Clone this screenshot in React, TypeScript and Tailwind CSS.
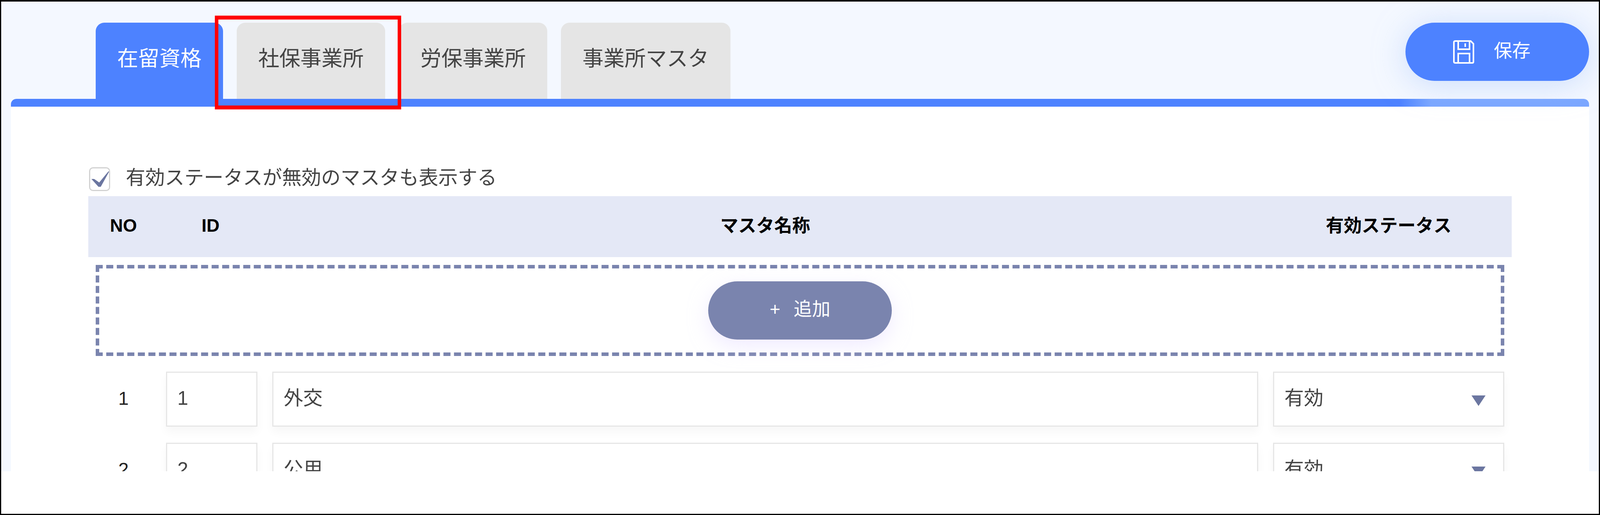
const tabs = [
  { label: "在留資格", active: true },
  { label: "社保事業所" },
  { label: "労保事業所" },
  { label: "事業所マスタ" },
];

const rows = [
  { no: 1, name: "外交" },
  { no: 2, name: "公用" },
];

const fieldClass =
  "flex h-[141px] items-center border-[3px] border-[#e6e6e6] bg-white pb-[4px] pl-[26px] text-[50px] text-[#444] shadow-[0_14px_22px_rgba(0,0,0,0.035)]";

function SaveIcon() {
  return (
    <svg width="54" height="60" viewBox="0 0 54 60" fill="none" stroke="white" strokeWidth="4">
      <path d="M6 2H45L52 9V55Q52 58 49 58H6Q2 58 2 55V5Q2 2 6 2Z" />
      <path d="M13 2V23H42V2" />
      <path d="M31 8V17" />
      <path d="M13 58V34H42V58" />
    </svg>
  );
}

function CheckMark() {
  return (
    <svg width="54" height="61" viewBox="0 0 54 61" className="absolute left-[-3px] top-[-3px]">
      <path d="M6 30H13L26 39L50 10L51 12L30 50H24Z" fill="#6b76a0" />
    </svg>
  );
}

export default function App() {
  return (
    <div className="relative flex h-[1318px] w-full flex-col border-x-[3px] border-t-[4px] border-b-[3px] border-black bg-white [font-family:'Liberation_Sans','Noto_Sans_CJK_JP',sans-serif]">
      <div className="h-[1202px] overflow-hidden bg-[#f4f8ff] px-[25px]">
        <div className="flex h-[249px] items-start justify-between pt-[54px]">
          <div className="flex gap-[35px] pl-[217px]">
            {tabs.map((tab) => (
              <div
                key={tab.label}
                className={
                  tab.active
                    ? "h-[195px] rounded-t-[22px] bg-[#4d82ff] px-[55px] pt-[65px] text-[54px] leading-[54px] text-white"
                    : "h-[195px] rounded-t-[22px] bg-[#e5e5e5] px-[55px] pt-[65px] text-[54px] leading-[54px] text-[#444]"
                }
              >
                {tab.label}
              </div>
            ))}
          </div>
          <button className="relative z-10 flex h-[149px] w-[470px] items-center justify-center gap-[50px] rounded-full bg-[#4d82ff] pr-[28px] text-[47px] text-white shadow-[0_8px_80px_rgba(170,198,250,0.55)]">
            <SaveIcon />
            <span className="mb-[5px]">保存</span>
          </button>
        </div>

        <div className="h-[20px] rounded-t-[14px] bg-gradient-to-r from-[#4d82ff] from-[88%] to-[#7aa6ff] to-[90%]" />
        <div className="bg-white px-[198px] pt-[155px]">
          <div className="flex h-[74px] items-start gap-[40px]">
            <div className="relative ml-[2px] h-[61px] w-[54px] rounded-[10px] border-[3px] border-[#d2d2d2] bg-white">
              <CheckMark />
            </div>
            <span className="text-[50px] leading-[54px] text-[#444]">
              有効ステータスが無効のマスタも表示する
            </span>
          </div>

          <div className="grid h-[156px] grid-cols-[142px_234px_1fr_592px] items-center gap-x-[38px] bg-[#e4e8f6] px-[19px] pb-[6px] text-center text-[46px] font-bold text-black">
            <div>NO</div>
            <div className="pr-[6px]">ID</div>
            <div>マスタ名称</div>
            <div>有効ステータス</div>
          </div>

          <div className="mx-[19px] mt-[20px] flex h-[233px] items-center justify-center border-[9px] border-dashed border-[#7a84ae]">
            <button className="relative z-10 flex h-[149px] w-[470px] items-center justify-center gap-[34px] rounded-full bg-[#7a84ae] pb-[6px] text-[47px] text-white shadow-[0_16px_50px_rgba(225,215,255,0.5)]">
              <span>+</span>
              <span>追加</span>
            </button>
          </div>

          <div className="mt-[40px] flex flex-col gap-[41px] px-[19px]">
            {rows.map((row) => (
              <div key={row.no} className="grid grid-cols-[142px_234px_1fr_592px] items-center gap-x-[38px]">
                <div className="pb-[4px] text-center text-[48px] text-[#222]">{row.no}</div>
                <div className={fieldClass}>{row.no}</div>
                <div className={fieldClass}>{row.name}</div>
                <div className={`${fieldClass} justify-between pr-[45px]`}>
                  <span>有効</span>
                  <svg width="36" height="27" viewBox="0 0 36 27" className="mt-[12px]">
                    <path d="M0 0H36L18 27Z" fill="#6b76a0" />
                  </svg>
                </div>
              </div>
            ))}
          </div>
        </div>
      </div>

      {/* red annotation frame */}
      <div className="absolute left-[547px] top-[36px] h-[240px] w-[477px] border-x-[9px] border-y-[10px] border-[#ff0000]" />
    </div>
  );
}
